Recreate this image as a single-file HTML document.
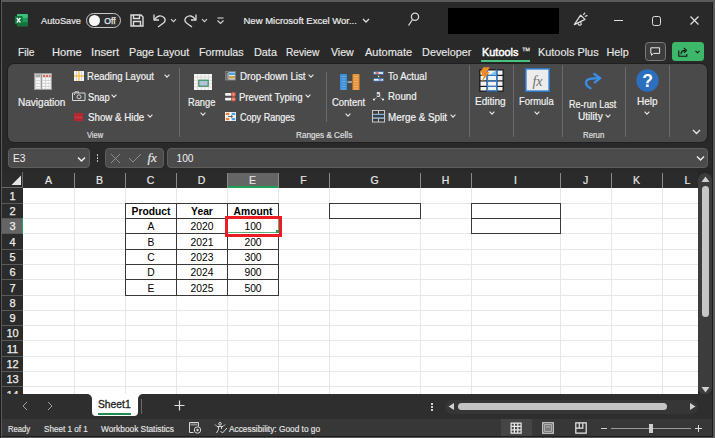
<!DOCTYPE html>
<html><head><meta charset="utf-8">
<style>
*{margin:0;padding:0;box-sizing:border-box}
html,body{width:715px;height:438px;overflow:hidden;background:#5a5a5a}
body{position:relative;font-family:"Liberation Sans",sans-serif;color:#fff}
.a{position:absolute}
.t{position:absolute;white-space:nowrap;line-height:12px}
#win{position:absolute;left:2px;top:2px;width:710px;height:434px;background:#292929;overflow:hidden}
.tab{font-size:10.8px;color:#e8e8e8;top:46px;-webkit-text-stroke:0.15px #e8e8e8}
.rb{font-size:10.8px;color:#f2f2f2;-webkit-text-stroke:0.2px #f2f2f2;transform:scaleX(0.885);transform-origin:0 0;margin-top:0.6px}
.gl{font-size:8.6px;color:#e0e0e0;-webkit-text-stroke:0.15px #e0e0e0;transform:scaleX(0.95);transform-origin:0 0;margin-top:0.3px}
.sep{position:absolute;width:1px;background:#6a6a6a}
.chev{position:absolute}
.col{position:absolute;top:173px;height:15px;line-height:15px;text-align:center;font-size:10.5px;color:#e6e6e6;-webkit-text-stroke:0.2px #e6e6e6}
.rh{position:absolute;left:2px;width:21px;text-align:center;font-size:11px;color:#eee;line-height:15px;-webkit-text-stroke:0.25px #eee;margin-top:-0.3px}
.cell{position:absolute;text-align:center;font-size:10.3px;color:#000;line-height:15px}
.sb{font-size:8.5px;color:#e6e6e6;top:422.8px;-webkit-text-stroke:0.15px #e6e6e6}
</style></head>
<body>
<div id="win"></div>
<!-- left dark column edge -->
<div class="a" style="left:0;top:0;width:1px;height:438px;background:#1a1a1a"></div>
<div class="a" style="left:712px;top:2px;width:1px;height:435px;background:#1c1c1c"></div>
<div class="a" style="left:2px;top:436px;width:711px;height:1px;background:#1c1c1c"></div>

<!-- ===== TITLE BAR ===== -->
<svg class="a" style="left:14px;top:13px" width="14" height="14" viewBox="0 0 14 14">
  <rect x="3" y="1" width="10.8" height="12.2" rx="1" fill="#1f9d55"/>
  <rect x="3" y="1" width="10.8" height="4" rx="1" fill="#3ac27c"/>
  <rect x="3" y="9.2" width="10.8" height="4" rx="1" fill="#14713d"/>
  <rect x="0.8" y="3" width="7.8" height="8.2" rx="0.8" fill="#10783f"/>
  <path d="M2.8 4.9l3.6 4.6M6.4 4.9l-3.6 4.6" stroke="#fff" stroke-width="1.3"/>
</svg>
<div class="t" style="left:41px;top:15.2px;font-size:9.2px;color:#e6e6e6;-webkit-text-stroke:0.2px #e6e6e6">AutoSave</div>
<div class="a" style="left:86px;top:12.5px;width:35px;height:15.7px;border:1.5px solid #c9c9c9;border-radius:8px;background:#2e2e2e"></div>
<div class="a" style="left:89px;top:14.8px;width:11px;height:11px;border-radius:50%;background:#f6f6f6"></div>
<div class="t" style="left:104.3px;top:14.9px;font-size:8.6px;color:#eaeaea;-webkit-text-stroke:0.25px #eaeaea">Off</div>
<!-- save icon -->
<svg class="a" style="left:130px;top:14px" width="14" height="13" viewBox="0 0 14 13" fill="none" stroke="#dcdcdc" stroke-width="1.4">
  <path d="M1 1h10l2 2v9H1z"/><path d="M3.5 1v3.5h6V1"/><path d="M3.5 12V7.5h7V12"/>
</svg>
<!-- undo -->
<svg class="a" style="left:152px;top:13px" width="15" height="15" viewBox="0 0 15 15" fill="none" stroke="#dcdcdc" stroke-width="1.3" stroke-linejoin="round">
  <path d="M2 1.5V7h5"/><path d="M2.5 6.5Q7 0.5 12 4.5Q14.5 7.5 11.5 10L6 14"/>
</svg>
<svg class="a" style="left:170px;top:18px" width="7" height="5" viewBox="0 0 7 5" fill="none" stroke="#d6d6d6" stroke-width="1.1"><path d="M1 1.2l2.5 2.5 2.5-2.5"/></svg>
<!-- redo -->
<svg class="a" style="left:183px;top:13px" width="15" height="15" viewBox="0 0 15 15" fill="none" stroke="#dcdcdc" stroke-width="1.3" stroke-linejoin="round">
  <path d="M13 1.5V7H8"/><path d="M12.5 6.5Q8 0.5 3 4.5Q0.5 7.5 3.5 10L9 14"/>
</svg>
<svg class="a" style="left:200.5px;top:18px" width="7" height="5" viewBox="0 0 7 5" fill="none" stroke="#d6d6d6" stroke-width="1.1"><path d="M1 1.2l2.5 2.5 2.5-2.5"/></svg>
<!-- customize -->
<svg class="a" style="left:216px;top:17px" width="9" height="8" viewBox="0 0 9 8" fill="none" stroke="#d6d6d6" stroke-width="1.1"><path d="M1.5 1h6"/><path d="M1.5 3.5l3 3 3-3"/></svg>
<div class="t" style="left:243.5px;top:15.3px;font-size:9.5px;color:#ececec;-webkit-text-stroke:0.2px #ececec">New Microsoft Excel Wor...</div>
<svg class="a" style="left:362px;top:18px" width="8" height="6" viewBox="0 0 8 6" fill="none" stroke="#ddd" stroke-width="1.3"><path d="M1 1l3 3 3-3"/></svg>
<!-- search -->
<svg class="a" style="left:407px;top:11px" width="13" height="16" viewBox="0 0 13 16" fill="none" stroke="#d8d8d8" stroke-width="1.3">
  <circle cx="8" cy="5.8" r="3.6"/><path d="M5.5 8.5L1.5 14.5"/>
</svg>
<div class="a" style="left:448px;top:8px;width:111px;height:25.5px;background:#000"></div>
<!-- coauthor icon -->
<svg class="a" style="left:570px;top:10px" width="20" height="20" viewBox="0 0 20 20" fill="none" stroke="#e0e0e0" stroke-width="1.2" stroke-linejoin="round" stroke-linecap="round">
  <path d="M4.3 14.6L10.6 5.2l4.4 4.2z"/><path d="M8 13.6q0.8 2.4 3.2 1.2l-0.3-2.3"/><path d="M13.6 4.6l1.1-1.5M15.3 6.3l1.7-0.7"/>
</svg>
<div class="a" style="left:614px;top:19.5px;width:8.5px;height:1.5px;background:#e0e0e0"></div>
<div class="a" style="left:651.5px;top:16px;width:9.5px;height:9.5px;border:1.3px solid #e0e0e0;border-radius:2.5px"></div>
<svg class="a" style="left:690px;top:16px" width="9" height="9" viewBox="0 0 9 9" stroke="#e0e0e0" stroke-width="1.2"><path d="M0.5 0.5l8 8M8.5 0.5l-8 8"/></svg>

<!-- ===== MENU TABS ===== -->
<div class="t tab" style="left:18.0px;transform:scaleX(0.947);transform-origin:0 0">File</div>
<div class="t tab" style="left:52.0px;transform:scaleX(1.032);transform-origin:0 0">Home</div>
<div class="t tab" style="left:91.3px;transform:scaleX(1.046);transform-origin:0 0">Insert</div>
<div class="t tab" style="left:129.2px;transform:scaleX(0.992);transform-origin:0 0">Page Layout</div>
<div class="t tab" style="left:199.0px;transform:scaleX(0.993);transform-origin:0 0">Formulas</div>
<div class="t tab" style="left:253.5px;transform:scaleX(1.005);transform-origin:0 0">Data</div>
<div class="t tab" style="left:286.3px;transform:scaleX(0.940);transform-origin:0 0">Review</div>
<div class="t tab" style="left:331.0px;transform:scaleX(0.979);transform-origin:0 0">View</div>
<div class="t tab" style="left:365.1px;transform:scaleX(1.021);transform-origin:0 0">Automate</div>
<div class="t tab" style="left:422.1px;transform:scaleX(1.000);transform-origin:0 0">Developer</div>
<div class="t tab" style="left:481.6px;color:#fff;-webkit-text-stroke:0.45px #fff;transform:scaleX(1.011);transform-origin:0 0">Kutools</div>
<div class="t tab" style="left:521.5px;color:#fff;font-size:9px;top:45px">™</div>
<div class="a" style="left:481px;top:60px;width:49px;height:2px;background:#47c27a"></div>
<div class="t tab" style="left:538.3px;transform:scaleX(1.010);transform-origin:0 0">Kutools Plus</div>
<div class="t tab" style="left:606.5px;transform:scaleX(1.000);transform-origin:0 0">Help</div>
<div class="a" style="left:645px;top:42px;width:20.5px;height:19px;border:1.2px solid #7a7a7a;border-radius:3.5px;background:#3c3c3c"></div>
<svg class="a" style="left:649.5px;top:46.5px" width="11" height="9" viewBox="0 0 11 9" fill="none" stroke="#eaeaea" stroke-width="1"><path d="M0.8 0.8h8.8v5.6H3.5L1.5 8.3V6.4H0.8z"/></svg>
<div class="a" style="left:672px;top:42px;width:32px;height:19px;border-radius:3.5px;background:#3db76a"></div>
<svg class="a" style="left:677.5px;top:46.5px" width="10" height="10" viewBox="0 0 10 10" fill="none" stroke="#141414" stroke-width="1.1" stroke-linejoin="round"><path d="M0.8 3.5v5.7h8V7"/><path d="M3 7.2c0-2.6 1.6-3.8 4.2-3.8M5.8 1l2.8 2.4-2.8 2.4"/></svg>
<svg class="a" style="left:695px;top:50px" width="5" height="4" viewBox="0 0 5 4" fill="none" stroke="#141414" stroke-width="1.1"><path d="M0.5 0.8l2 2 2-2"/></svg>

<!-- ===== RIBBON ===== -->
<div class="a" style="left:8px;top:64px;width:699px;height:78px;background:#4a4a4a;border-radius:6px;box-shadow:0 0 0 1px #202020"></div>

<!-- View group -->
<svg class="a" style="left:34px;top:73px" width="18" height="17" viewBox="0 0 18 17">
  <rect x="0" y="0" width="18" height="17" fill="#9c9c9c"/>
  <rect x="1" y="1" width="16" height="15" fill="#d6d6d6"/>
  <rect x="1.5" y="1.5" width="5" height="2.5" fill="#a8a8a8"/>
  <g fill="#f4f4f4"><rect x="2" y="5" width="4" height="2"/><rect x="2" y="8" width="4" height="2"/><rect x="2" y="11" width="4" height="2"/><rect x="2" y="14" width="4" height="1.5"/></g>
  <rect x="7" y="1" width="1" height="15" fill="#9a9a9a"/>
  <g fill="#e2604a"><rect x="9" y="2" width="2" height="2"/><rect x="12" y="2" width="2" height="2"/><rect x="15" y="2" width="1.5" height="2"/></g>
  <g fill="#fafafa"><rect x="8.5" y="5" width="2.5" height="1.8"/><rect x="12" y="5" width="2.5" height="1.8"/><rect x="15" y="5" width="1.5" height="1.8"/><rect x="8.5" y="8" width="2.5" height="1.8"/><rect x="12" y="8" width="2.5" height="1.8"/><rect x="15" y="8" width="1.5" height="1.8"/><rect x="8.5" y="11" width="2.5" height="1.8"/><rect x="12" y="11" width="2.5" height="1.8"/><rect x="15" y="11" width="1.5" height="1.8"/><rect x="8.5" y="14" width="2.5" height="1.5"/><rect x="12" y="14" width="2.5" height="1.5"/><rect x="15" y="14" width="1.5" height="1.5"/></g>
</svg>
<div class="t rb" style="left:18.1px;top:95.3px;transform:scaleX(0.929)">Navigation</div>

<svg class="a" style="left:73.5px;top:71px" width="10" height="10" viewBox="0 0 10 10">
  <rect x="0" y="0" width="10" height="10" fill="#f4f4f4"/>
  <g fill="#c9c6dc"><rect x="2" y="0" width="0.8" height="10"/><rect x="7.2" y="0" width="0.8" height="10"/></g>
  <rect x="4.3" y="0" width="1.4" height="10" fill="#f3c44f"/><rect x="0" y="4.1" width="10" height="1.6" fill="#f3c44f"/>
</svg>
<div class="t rb" style="left:87.0px;top:69.6px;transform:scaleX(0.885)">Reading Layout</div>
<svg class="chev" style="left:163.5px;top:74.1px" width="6" height="4" viewBox="0 0 6 4" fill="none" stroke="#e8e8e8" stroke-width="1.1"><path d="M0.6 0.7L3 3.1 5.4 0.7"/></svg>

<svg class="a" style="left:72px;top:90.5px" width="13.5" height="10" viewBox="0 0 13.5 10" fill="none" stroke="#d6d6d6" stroke-width="1">
  <path d="M0.5 2h12.5v7.5H0.5z"/><path d="M3 2V0.8h3.5V2"/><circle cx="7" cy="5.8" r="2"/><path d="M2 3.5h1"/>
</svg>
<div class="t rb" style="left:88.0px;top:90.8px;transform:scaleX(0.857)">Snap</div>
<svg class="chev" style="left:111.4px;top:93.8px" width="6" height="4" viewBox="0 0 6 4" fill="none" stroke="#e8e8e8" stroke-width="1.1"><path d="M0.6 0.7L3 3.1 5.4 0.7"/></svg>

<svg class="a" style="left:74px;top:112.5px" width="9" height="8.5" viewBox="0 0 9 8.5">
  <rect width="9" height="8.5" fill="#b8262f"/><g fill="#d8707a"><rect x="1.5" y="3.8" width="1" height="1"/><rect x="4" y="3.8" width="1" height="1"/><rect x="6.5" y="3.8" width="1" height="1"/></g>
</svg>
<div class="t rb" style="left:88.0px;top:110.5px;transform:scaleX(0.901)">Show &amp; Hide</div>
<svg class="chev" style="left:146.6px;top:114.0px" width="6" height="4" viewBox="0 0 6 4" fill="none" stroke="#e8e8e8" stroke-width="1.1"><path d="M0.6 0.7L3 3.1 5.4 0.7"/></svg>
<div class="t gl" style="left:87px;top:129.2px;transform:scaleX(0.873)">View</div>
<div class="sep" style="left:179px;top:68px;height:69px"></div>

<!-- Ranges & Cells group -->
<svg class="a" style="left:193.5px;top:73.5px" width="18" height="16" viewBox="0 0 18 16">
  <rect width="18" height="16" fill="#f6f6f6"/>
  <g stroke="#d2d2d2" stroke-width="0.7"><path d="M0 3.2h18M0 6.4h18M0 9.6h18M0 12.8h18M3.6 0v16M7.2 0v16M10.8 0v16M14.4 0v16"/></g>
  <rect x="4.8" y="6.2" width="9.4" height="6" fill="#b3c3d8" stroke="#2e8b57" stroke-width="1.1"/>
</svg>
<div class="t rb" style="left:188.4px;top:95.3px;transform:scaleX(0.859)">Range</div>
<svg class="chev" style="left:199.8px;top:112.1px" width="6" height="4" viewBox="0 0 6 4" fill="none" stroke="#e8e8e8" stroke-width="1.1"><path d="M0.6 0.7L3 3.1 5.4 0.7"/></svg>

<svg class="a" style="left:225px;top:71px" width="11" height="9.5" viewBox="0 0 11 9.5">
  <rect x="0.5" y="0.5" width="10" height="8.5" fill="#e8e8e8" stroke="#7a7a7a" stroke-width="1"/>
  <rect x="1" y="1" width="2.5" height="7.5" fill="#5a5a5a"/>
  <g fill="#eee"><rect x="1.6" y="2.5" width="1.3" height="0.8"/><rect x="1.6" y="4.5" width="1.3" height="0.8"/><rect x="1.6" y="6.5" width="1.3" height="0.8"/></g>
  <rect x="4" y="1.5" width="6" height="2.5" fill="#4aa3e0"/><rect x="4" y="5" width="6" height="2.5" fill="#c9a050"/>
</svg>
<div class="t rb" style="left:239.5px;top:69.6px;transform:scaleX(0.903)">Drop-down List</div>
<svg class="chev" style="left:308.2px;top:73.8px" width="6" height="4" viewBox="0 0 6 4" fill="none" stroke="#e8e8e8" stroke-width="1.1"><path d="M0.6 0.7L3 3.1 5.4 0.7"/></svg>

<svg class="a" style="left:225px;top:92px" width="11" height="9.5" viewBox="0 0 11 9.5">
  <rect x="0" y="1" width="6.5" height="2.8" rx="1" fill="#f0f0f0"/><rect x="0" y="5.8" width="6.5" height="2.8" rx="1" fill="#f0f0f0"/>
  <circle cx="8.5" cy="2.4" r="2.3" fill="#e0604a"/><circle cx="8.5" cy="7.2" r="2.3" fill="#e0604a"/>
  <path d="M7.7 1.6l1.6 1.6M9.3 1.6l-1.6 1.6M7.7 6.4l1.6 1.6M9.3 6.4l-1.6 1.6" stroke="#fbe0da" stroke-width="0.6"/>
</svg>
<div class="t rb" style="left:239.0px;top:90px;transform:scaleX(0.885)">Prevent Typing</div>
<svg class="chev" style="left:304.6px;top:94.2px" width="6" height="4" viewBox="0 0 6 4" fill="none" stroke="#e8e8e8" stroke-width="1.1"><path d="M0.6 0.7L3 3.1 5.4 0.7"/></svg>

<svg class="a" style="left:225px;top:112px" width="11" height="9" viewBox="0 0 11 9">
  <rect width="11" height="9" fill="#f4f4f4"/>
  <rect x="0.8" y="0.8" width="3.5" height="2.3" fill="#e8843a"/><rect x="0.8" y="5.9" width="3.5" height="2.3" fill="#e8843a"/>
  <rect x="6.7" y="0.8" width="3.5" height="2.3" fill="#4aa3e0"/><rect x="6.7" y="5.9" width="3.5" height="2.3" fill="#4aa3e0"/>
  <path d="M3 4.5h4.5M6 3.3l1.5 1.2L6 5.7" stroke="#444" stroke-width="0.8" fill="none"/>
</svg>
<div class="t rb" style="left:240.0px;top:110.5px;transform:scaleX(0.839)">Copy Ranges</div>
<div class="sep" style="left:326px;top:72px;height:50px"></div>

<svg class="a" style="left:339.5px;top:73.5px" width="20" height="16.5" viewBox="0 0 20 16.5">
  <rect x="0" y="0" width="7" height="16.5" rx="0.8" fill="#3d8fd8"/><rect x="12.5" y="0" width="7" height="16.5" rx="0.8" fill="#e8943a"/>
  <path d="M7.5 8h4.5" stroke="#d8d8d8" stroke-width="1.2"/>
  <g stroke="#8cc0ee" stroke-width="0.6"><path d="M1.5 2.5h4M1.5 5h4M1.5 7.5h4M1.5 10h4M1.5 12.5h4M1.5 15h4"/></g>
  <g stroke="#f5c48e" stroke-width="0.6"><path d="M14 2.5h4M14 5h4M14 7.5h4M14 10h4M14 12.5h4M14 15h4"/></g>
</svg>
<div class="t rb" style="left:332.3px;top:95.3px;transform:scaleX(0.877)">Content</div>
<svg class="chev" style="left:345.4px;top:112.8px" width="6" height="4" viewBox="0 0 6 4" fill="none" stroke="#e8e8e8" stroke-width="1.1"><path d="M0.6 0.7L3 3.1 5.4 0.7"/></svg>

<svg class="a" style="left:372.5px;top:70.5px" width="11" height="11" viewBox="0 0 11 11">
  <rect x="0.3" y="0.5" width="10.4" height="3" rx="0.5" fill="#3d8fd8"/><rect x="1" y="1.2" width="9" height="1.6" fill="#f4f4f4"/><rect x="2.5" y="1.2" width="3" height="1.6" fill="#d9534f"/>
  <rect x="0.3" y="7.3" width="10.4" height="3" rx="0.5" fill="#3d8fd8"/><rect x="1" y="8" width="9" height="1.6" fill="#f4f4f4"/><rect x="5.5" y="8" width="3" height="1.6" fill="#9b7fd0"/>
  <rect x="5" y="4.8" width="1.2" height="1.4" fill="#eee"/>
</svg>
<div class="t rb" style="left:388.0px;top:69.6px;transform:scaleX(0.885)">To Actual</div>

<svg class="a" style="left:372px;top:91px" width="13" height="10" viewBox="0 0 13 10" fill="none">
  <text x="4.6" y="6.2" font-size="6.8" font-family="Liberation Sans" font-weight="bold" fill="#f0f0f0">5</text>
  <circle cx="2" cy="8.5" r="1.1" fill="#f0f0f0"/><circle cx="11" cy="8.5" r="1.1" fill="#f0f0f0"/>
  <path d="M3.3 7.6l1.2-0.9M9.7 7.6l-1.2-0.9" stroke="#cfcfcf" stroke-width="0.8"/>
</svg>
<div class="t rb" style="left:388.2px;top:89.6px;transform:scaleX(0.898)">Round</div>

<svg class="a" style="left:371.5px;top:110px" width="13" height="12.5" viewBox="0 0 13 12.5">
  <rect x="0.5" y="0.5" width="12" height="11.5" fill="#3a3a3a" stroke="#c8c8c8" stroke-width="1"/>
  <path d="M0.5 4.3h12M0.5 8.2h12M6.5 0.5v3.8M6.5 8.2v3.8" stroke="#c8c8c8" stroke-width="1"/>
  <path d="M1 4.6h11M1 7.9h11" stroke="#6fb0e8" stroke-width="0.9"/>
</svg>
<div class="t rb" style="left:388.2px;top:110.5px;transform:scaleX(0.912)">Merge &amp; Split</div>
<svg class="chev" style="left:449.7px;top:114.3px" width="6" height="4" viewBox="0 0 6 4" fill="none" stroke="#e8e8e8" stroke-width="1.1"><path d="M0.6 0.7L3 3.1 5.4 0.7"/></svg>
<div class="t gl" style="left:296px;top:129px">Ranges &amp; Cells</div>
<div class="sep" style="left:469px;top:65px;height:72px"></div>

<!-- Editing -->
<svg class="a" style="left:478px;top:67px" width="26" height="25" viewBox="0 0 26 25">
  <rect x="1.2" y="2.2" width="24.5" height="22.5" fill="#1c1c1c"/>
  <g fill="#f2f2f2">
    <rect x="2.5" y="3.5" width="6" height="4.3"/><rect x="10" y="3.5" width="8" height="4.3"/><rect x="19.5" y="3.5" width="5" height="4.3"/>
    <rect x="2.5" y="9" width="6" height="4.3"/><rect x="10" y="9" width="8" height="4.3"/><rect x="19.5" y="9" width="5" height="4.3"/>
    <rect x="2.5" y="14.5" width="6" height="4.3"/><rect x="10" y="14.5" width="8" height="4.3"/><rect x="19.5" y="14.5" width="5" height="4.3"/>
    <rect x="2.5" y="20" width="6" height="3.5"/><rect x="10" y="20" width="8" height="3.5"/><rect x="19.5" y="20" width="5" height="3.5"/>
  </g>
  <path d="M18 3.5v4.3h-6z" fill="#7cc0f0"/>
  <g fill="#2f7fd0"><rect x="8.8" y="2.5" width="1.3" height="22"/><rect x="18" y="2.5" width="1.3" height="22"/><rect x="8.8" y="7.9" width="10.5" height="1.1"/><rect x="8.8" y="13.4" width="10.5" height="1.1"/><rect x="8.8" y="18.9" width="10.5" height="1.1"/><rect x="8.8" y="23.4" width="10.5" height="1.2"/></g>
  <path d="M5.5 0.3h6.3l-3 4.6h2.7L3.5 15.3l2.6-6.4H3.2l1-3.2H1.8z" fill="#f08a24"/>
</svg>
<div class="t rb" style="left:475.1px;top:94px;transform:scaleX(0.929)">Editing</div>
<svg class="chev" style="left:488.5px;top:111.1px" width="6" height="4" viewBox="0 0 6 4" fill="none" stroke="#e8e8e8" stroke-width="1.1"><path d="M0.6 0.7L3 3.1 5.4 0.7"/></svg>
<div class="sep" style="left:513px;top:65px;height:72px"></div>

<!-- Formula -->
<svg class="a" style="left:525px;top:68px" width="25" height="24" viewBox="0 0 25 24">
  <rect x="0.8" y="0.8" width="23.4" height="22.4" fill="#ececec" stroke="#2b78c8" stroke-width="1.6"/>
  <text x="12.5" y="17.5" font-size="14" font-family="Liberation Serif" font-style="italic" fill="#6e6e6e" text-anchor="middle">fx</text>
</svg>
<div class="t rb" style="left:519.1px;top:94px;transform:scaleX(0.875)">Formula</div>
<svg class="chev" style="left:534.3px;top:111.1px" width="6" height="4" viewBox="0 0 6 4" fill="none" stroke="#e8e8e8" stroke-width="1.1"><path d="M0.6 0.7L3 3.1 5.4 0.7"/></svg>
<div class="sep" style="left:562px;top:65px;height:72px"></div>

<!-- Rerun -->
<svg class="a" style="left:583px;top:72px" width="20" height="19" viewBox="0 0 20 19" fill="none">
  <path d="M7.5 16.3C3 14.5 1.8 10.5 4.2 8.2C6 6.5 9 6.2 16.5 6.2" stroke="#3a8ee6" stroke-width="2.3" stroke-linecap="round"/>
  <path d="M11.3 2l6 4.2-5.6 4.2" stroke="#3a8ee6" stroke-width="2.3" stroke-linecap="round" stroke-linejoin="round"/>
</svg>
<div class="t rb" style="left:569.0px;top:97.1px;transform:scaleX(0.840)">Re-run Last</div>
<div class="t rb" style="left:577.6px;top:109.5px;transform:scaleX(0.935)">Utility</div>
<svg class="chev" style="left:604.6px;top:114.0px" width="6" height="4" viewBox="0 0 6 4" fill="none" stroke="#e8e8e8" stroke-width="1.1"><path d="M0.6 0.7L3 3.1 5.4 0.7"/></svg>
<div class="t gl" style="left:582.5px;top:129px;transform:scaleX(0.91)">Rerun</div>
<div class="sep" style="left:625px;top:67px;height:70px"></div>

<!-- Help -->
<svg class="a" style="left:636px;top:69px" width="23" height="23" viewBox="0 0 23 23">
  <circle cx="11.5" cy="11.5" r="11.2" fill="#2c6fbe"/>
  <text x="11.5" y="18.3" font-size="17.5" font-family="Liberation Sans" font-weight="bold" fill="#fff" text-anchor="middle">?</text>
</svg>
<div class="t rb" style="left:636.6px;top:94px;transform:scaleX(0.927)">Help</div>
<svg class="chev" style="left:643.8px;top:111.1px" width="6" height="4" viewBox="0 0 6 4" fill="none" stroke="#e8e8e8" stroke-width="1.1"><path d="M0.6 0.7L3 3.1 5.4 0.7"/></svg>
<div class="sep" style="left:669px;top:65px;height:72px"></div>
<svg class="chev" style="left:692px;top:128.8px" width="9" height="6" viewBox="0 0 9 6" fill="none" stroke="#e6e6e6" stroke-width="1.3"><path d="M1 1l3.5 3.5L8 1"/></svg>

<!-- ===== FORMULA BAR ===== -->
<div class="a" style="left:8px;top:148px;width:82px;height:20px;background:#4b4b4b;border:1px solid #5e5e5e;border-radius:4px"></div>
<div class="t" style="left:13px;top:153.3px;font-size:10.2px;color:#eee">E3</div>
<svg class="chev" style="left:77px;top:156px" width="9" height="7" viewBox="0 0 9 7" fill="none" stroke="#f0f0f0" stroke-width="1.5"><path d="M1 1.5l3.5 3.5 3.5-3.5"/></svg>
<div class="a" style="left:96.5px;top:154px;width:1.6px;height:1.6px;background:#ddd;border-radius:1px"></div>
<div class="a" style="left:96.5px;top:157.2px;width:1.6px;height:1.6px;background:#ddd;border-radius:1px"></div>
<div class="a" style="left:96.5px;top:160.4px;width:1.6px;height:1.6px;background:#ddd;border-radius:1px"></div>
<div class="a" style="left:105px;top:148px;width:59px;height:20px;background:#4b4b4b;border:1px solid #5e5e5e;border-radius:4px"></div>
<svg class="a" style="left:110px;top:153px" width="11" height="11" viewBox="0 0 11 11" stroke="#8e8e8e" stroke-width="1"><path d="M1 1l9 9M10 1L1 10"/></svg>
<svg class="a" style="left:127.5px;top:153px" width="14" height="10" viewBox="0 0 14 10" fill="none" stroke="#8e8e8e" stroke-width="1"><path d="M1 5l4 4 8-8"/></svg>
<div class="t" style="left:147.5px;top:151.5px;font-size:13px;font-family:'Liberation Serif',serif;font-style:italic;color:#e6e6e6;-webkit-text-stroke:0.2px #e6e6e6">fx</div>
<div class="a" style="left:167px;top:148px;width:541px;height:20px;background:#4b4b4b;border:1px solid #5e5e5e;border-radius:4px"></div>
<div class="t" style="left:176.5px;top:153.3px;font-size:10.2px;color:#f0f0f0">100</div>
<svg class="chev" style="left:696px;top:155px" width="9" height="7" viewBox="0 0 9 7" fill="none" stroke="#f0f0f0" stroke-width="1.4"><path d="M1 1.5l3.5 3.5 3.5-3.5"/></svg>

<!-- ===== GRID ===== -->
<div class="a" style="left:2px;top:172px;width:696px;height:16px;background:#2b2b2b"></div>
<!-- select-all triangle -->
<svg class="a" style="left:10.5px;top:175px" width="11" height="11" viewBox="0 0 11 11"><path d="M10 0.5V10H0.5z" fill="#e6e6e6"/></svg>
<div class="a" style="left:2px;top:187px;width:21px;height:1px;background:#6a6a6a"></div>
<div class="a" style="left:22px;top:172px;width:1px;height:16px;background:#6a6a6a"></div>
<!-- cells area -->
<div class="a" style="left:23px;top:188px;width:675px;height:206px;background:#fff"></div>
<div class="a" style="left:2px;top:188px;width:21px;height:205px;background:#2b2b2b"></div>
<div class="a" style="left:228px;top:173px;width:50px;height:14px;background:#656565"></div>
<div class="a" style="left:227px;top:186px;width:52px;height:2px;background:#21a05a"></div>
<div class="col" style="left:23px;width:51px">A</div>
<div class="col" style="left:74px;width:51px">B</div>
<div class="a" style="left:74px;top:173px;width:1px;height:15px;background:#8a8a8a"></div>
<div class="col" style="left:125px;width:51px">C</div>
<div class="a" style="left:125px;top:173px;width:1px;height:15px;background:#8a8a8a"></div>
<div class="col" style="left:176px;width:51px">D</div>
<div class="a" style="left:176px;top:173px;width:1px;height:15px;background:#8a8a8a"></div>
<div class="col" style="left:227px;width:51px">E</div>
<div class="a" style="left:227px;top:173px;width:1px;height:15px;background:#8a8a8a"></div>
<div class="col" style="left:278px;width:51px">F</div>
<div class="a" style="left:278px;top:173px;width:1px;height:15px;background:#8a8a8a"></div>
<div class="col" style="left:329px;width:91px">G</div>
<div class="a" style="left:329px;top:173px;width:1px;height:15px;background:#8a8a8a"></div>
<div class="col" style="left:420px;width:51px">H</div>
<div class="a" style="left:420px;top:173px;width:1px;height:15px;background:#8a8a8a"></div>
<div class="col" style="left:471px;width:89px">I</div>
<div class="a" style="left:471px;top:173px;width:1px;height:15px;background:#8a8a8a"></div>
<div class="col" style="left:560px;width:51px">J</div>
<div class="a" style="left:560px;top:173px;width:1px;height:15px;background:#8a8a8a"></div>
<div class="col" style="left:611px;width:51px">K</div>
<div class="a" style="left:611px;top:173px;width:1px;height:15px;background:#8a8a8a"></div>
<div class="col" style="left:662px;width:51px">L</div>
<div class="a" style="left:662px;top:173px;width:1px;height:15px;background:#8a8a8a"></div>
<div class="a" style="left:74px;top:188px;width:1px;height:206px;background:#e7e7e7"></div>
<div class="a" style="left:125px;top:188px;width:1px;height:206px;background:#e7e7e7"></div>
<div class="a" style="left:176px;top:188px;width:1px;height:206px;background:#e7e7e7"></div>
<div class="a" style="left:227px;top:188px;width:1px;height:206px;background:#e7e7e7"></div>
<div class="a" style="left:278px;top:188px;width:1px;height:206px;background:#e7e7e7"></div>
<div class="a" style="left:329px;top:188px;width:1px;height:206px;background:#e7e7e7"></div>
<div class="a" style="left:420px;top:188px;width:1px;height:206px;background:#e7e7e7"></div>
<div class="a" style="left:471px;top:188px;width:1px;height:206px;background:#e7e7e7"></div>
<div class="a" style="left:560px;top:188px;width:1px;height:206px;background:#e7e7e7"></div>
<div class="a" style="left:611px;top:188px;width:1px;height:206px;background:#e7e7e7"></div>
<div class="a" style="left:662px;top:188px;width:1px;height:206px;background:#e7e7e7"></div>
<div class="a" style="left:23px;top:203px;width:675px;height:1px;background:#e7e7e7"></div>
<div class="a" style="left:2px;top:203px;width:21px;height:1px;background:#5a5a5a"></div>
<div class="a" style="left:23px;top:218px;width:675px;height:1px;background:#e7e7e7"></div>
<div class="a" style="left:2px;top:218px;width:21px;height:1px;background:#5a5a5a"></div>
<div class="a" style="left:23px;top:233px;width:675px;height:1px;background:#e7e7e7"></div>
<div class="a" style="left:2px;top:233px;width:21px;height:1px;background:#5a5a5a"></div>
<div class="a" style="left:23px;top:249px;width:675px;height:1px;background:#e7e7e7"></div>
<div class="a" style="left:2px;top:249px;width:21px;height:1px;background:#5a5a5a"></div>
<div class="a" style="left:23px;top:264px;width:675px;height:1px;background:#e7e7e7"></div>
<div class="a" style="left:2px;top:264px;width:21px;height:1px;background:#5a5a5a"></div>
<div class="a" style="left:23px;top:279px;width:675px;height:1px;background:#e7e7e7"></div>
<div class="a" style="left:2px;top:279px;width:21px;height:1px;background:#5a5a5a"></div>
<div class="a" style="left:23px;top:295px;width:675px;height:1px;background:#e7e7e7"></div>
<div class="a" style="left:2px;top:295px;width:21px;height:1px;background:#5a5a5a"></div>
<div class="a" style="left:23px;top:310px;width:675px;height:1px;background:#e7e7e7"></div>
<div class="a" style="left:2px;top:310px;width:21px;height:1px;background:#5a5a5a"></div>
<div class="a" style="left:23px;top:325px;width:675px;height:1px;background:#e7e7e7"></div>
<div class="a" style="left:2px;top:325px;width:21px;height:1px;background:#5a5a5a"></div>
<div class="a" style="left:23px;top:340px;width:675px;height:1px;background:#e7e7e7"></div>
<div class="a" style="left:2px;top:340px;width:21px;height:1px;background:#5a5a5a"></div>
<div class="a" style="left:23px;top:356px;width:675px;height:1px;background:#e7e7e7"></div>
<div class="a" style="left:2px;top:356px;width:21px;height:1px;background:#5a5a5a"></div>
<div class="a" style="left:23px;top:371px;width:675px;height:1px;background:#e7e7e7"></div>
<div class="a" style="left:2px;top:371px;width:21px;height:1px;background:#5a5a5a"></div>
<div class="a" style="left:23px;top:386px;width:675px;height:1px;background:#e7e7e7"></div>
<div class="a" style="left:2px;top:386px;width:21px;height:1px;background:#5a5a5a"></div>
<div class="a" style="left:2px;top:219px;width:20px;height:14px;background:#656565"></div>
<div class="a" style="left:22px;top:218px;width:1px;height:16px;background:#21a05a"></div>
<div class="rh" style="top:189px">1</div>
<div class="rh" style="top:204px">2</div>
<div class="rh" style="top:219px">3</div>
<div class="rh" style="top:235px">4</div>
<div class="rh" style="top:250px">5</div>
<div class="rh" style="top:265px">6</div>
<div class="rh" style="top:281px">7</div>
<div class="rh" style="top:296px">8</div>
<div class="rh" style="top:311px">9</div>
<div class="rh" style="top:326px">10</div>
<div class="rh" style="top:342px">11</div>
<div class="rh" style="top:357px">12</div>
<div class="rh" style="top:372px">13</div>
<div class="rh" style="top:388px">14</div>
<div class="cell" style="left:125px;top:204px;width:52px;font-weight:bold;">Product</div>
<div class="cell" style="left:176px;top:204px;width:52px;font-weight:bold;">Year</div>
<div class="cell" style="left:227px;top:204px;width:52px;font-weight:bold;">Amount</div>
<div class="cell" style="left:125px;top:219px;width:52px;">A</div>
<div class="cell" style="left:176px;top:219px;width:52px;">2020</div>
<div class="cell" style="left:227px;top:219px;width:52px;">100</div>
<div class="cell" style="left:125px;top:235px;width:52px;">B</div>
<div class="cell" style="left:176px;top:235px;width:52px;">2021</div>
<div class="cell" style="left:227px;top:235px;width:52px;">200</div>
<div class="cell" style="left:125px;top:250px;width:52px;">C</div>
<div class="cell" style="left:176px;top:250px;width:52px;">2023</div>
<div class="cell" style="left:227px;top:250px;width:52px;">300</div>
<div class="cell" style="left:125px;top:265px;width:52px;">D</div>
<div class="cell" style="left:176px;top:265px;width:52px;">2024</div>
<div class="cell" style="left:227px;top:265px;width:52px;">900</div>
<div class="cell" style="left:125px;top:281px;width:52px;">E</div>
<div class="cell" style="left:176px;top:281px;width:52px;">2025</div>
<div class="cell" style="left:227px;top:281px;width:52px;">500</div>
<div class="a" style="left:125px;top:203px;width:1px;height:93px;background:#383838"></div>
<div class="a" style="left:176px;top:203px;width:1px;height:93px;background:#383838"></div>
<div class="a" style="left:227px;top:203px;width:1px;height:93px;background:#383838"></div>
<div class="a" style="left:278px;top:203px;width:1px;height:93px;background:#383838"></div>
<div class="a" style="left:125px;top:203px;width:154px;height:1px;background:#383838"></div>
<div class="a" style="left:125px;top:218px;width:154px;height:1px;background:#383838"></div>
<div class="a" style="left:125px;top:233px;width:154px;height:1px;background:#383838"></div>
<div class="a" style="left:125px;top:249px;width:154px;height:1px;background:#383838"></div>
<div class="a" style="left:125px;top:264px;width:154px;height:1px;background:#383838"></div>
<div class="a" style="left:125px;top:279px;width:154px;height:1px;background:#383838"></div>
<div class="a" style="left:125px;top:295px;width:154px;height:1px;background:#383838"></div>
<div class="a" style="left:329px;top:203px;width:92px;height:16px;border:1px solid #383838"></div>
<div class="a" style="left:471px;top:203px;width:90px;height:31px;border:1px solid #383838"></div>
<div class="a" style="left:471px;top:218px;width:90px;height:1px;background:#383838"></div>
<div class="a" style="left:228px;top:218px;width:51px;height:16px;background:#fff"></div>
<div class="cell" style="left:227px;top:219px;width:52px">100</div>
<div class="a" style="left:228px;top:232px;width:51px;height:1px;background:#5fae7f"></div>
<div class="a" style="left:278px;top:218px;width:1px;height:15px;background:#5fae7f"></div>
<div class="a" style="left:276px;top:230px;width:3px;height:3px;background:#21a05a"></div>
<div class="a" style="left:225px;top:215.5px;width:57px;height:21.5px;border:3px solid #ec1c24"></div>

<!-- vertical scrollbar -->
<div class="a" style="left:698px;top:168px;width:14px;height:226px;background:#262626"></div>
<div class="a" style="left:698px;top:173px;width:13.5px;height:222px;background:#3c3c3c;border-radius:7px"></div>
<svg class="a" style="left:701px;top:176px" width="9" height="7" viewBox="0 0 9 7"><path d="M4.5 0.5L8.5 6H0.5z" fill="#d0d0d0"/></svg>
<div class="a" style="left:702px;top:186px;width:7px;height:131px;background:#c6c6c6;border-radius:3.5px"></div>
<svg class="a" style="left:701px;top:386px" width="9" height="7" viewBox="0 0 9 7"><path d="M4.5 6.5L8.5 1H0.5z" fill="#d0d0d0"/></svg>
<!-- ===== SHEET TABS ===== -->
<div class="a" style="left:2px;top:394px;width:710px;height:25px;background:#2e2e2e"></div>
<div class="a" style="left:86px;top:394px;width:58px;height:6px;background:#fff"></div>
<div class="a" style="left:2px;top:394px;width:90px;height:25px;background:#2e2e2e;border-top-right-radius:5px"></div>
<div class="a" style="left:138px;top:394px;width:560px;height:25px;background:#2e2e2e;border-top-left-radius:5px"></div>
<div class="a" style="left:92px;top:394px;width:46px;height:22px;background:#fff;border-radius:0 0 4px 4px"></div>
<svg class="chev" style="left:21px;top:401px" width="7" height="10" viewBox="0 0 7 10" fill="none" stroke="#a0a0a0" stroke-width="1"><path d="M6 1L2 5l4 4"/></svg>
<svg class="chev" style="left:47px;top:401px" width="7" height="10" viewBox="0 0 7 10" fill="none" stroke="#a0a0a0" stroke-width="1"><path d="M1 1l4 4-4 4"/></svg>
<div class="t" style="left:98px;top:399.1px;font-size:10.3px;color:#1c1c1c;-webkit-text-stroke:0.3px #1c1c1c">Sheet1</div>
<div class="a" style="left:98px;top:412.5px;width:33px;height:2px;background:#1e8c4e"></div>
<div class="a" style="left:141px;top:399px;width:1px;height:15px;background:#6a6a6a"></div>
<svg class="a" style="left:174px;top:400px" width="11" height="11" viewBox="0 0 11 11" stroke="#e0e0e0" stroke-width="1.2"><path d="M5.5 0.5v10M0.5 5.5h10"/></svg>
<div class="a" style="left:430.5px;top:403px;width:2px;height:2px;background:#d0d0d0"></div>
<div class="a" style="left:430.5px;top:406px;width:2px;height:2px;background:#d0d0d0"></div>
<div class="a" style="left:430.5px;top:409px;width:2px;height:2px;background:#d0d0d0"></div>
<div class="a" style="left:445px;top:400px;width:253px;height:14px;background:#363636;border-radius:7px"></div>
<svg class="a" style="left:447px;top:402px" width="8" height="9" viewBox="0 0 8 9"><path d="M1.5 4.5L7 1v7z" fill="#d0d0d0"/></svg>
<div class="a" style="left:458px;top:403px;width:209px;height:7px;background:#c4c4c4;border-radius:3.5px"></div>
<svg class="a" style="left:689px;top:402px" width="8" height="9" viewBox="0 0 8 9"><path d="M6.5 4.5L1 1v7z" fill="#d0d0d0"/></svg>

<!-- ===== STATUS BAR ===== -->
<div class="a" style="left:2px;top:419px;width:710px;height:17px;background:#373737"></div>
<div class="t sb" style="left:8.4px;transform:scaleX(0.904);transform-origin:0 0">Ready</div>
<div class="t sb" style="left:44.0px;transform:scaleX(0.957);transform-origin:0 0">Sheet 1 of 1</div>
<div class="t sb" style="left:101.0px;transform:scaleX(0.979);transform-origin:0 0">Workbook Statistics</div>
<svg class="a" style="left:189px;top:422px" width="13" height="12" viewBox="0 0 13 12" fill="none" stroke="#d8d8d8" stroke-width="1"><path d="M9.5 4.5V0.5h-9v10h4"/><rect x="1.5" y="1.5" width="7" height="2" fill="#8a8a8a" stroke="none"/><circle cx="8.5" cy="8" r="3.2" fill="#353535"/><circle cx="8.5" cy="8" r="1.2" fill="#d8d8d8" stroke="none"/></svg>
<svg class="a" style="left:214px;top:422px" width="14" height="12" viewBox="0 0 14 12" fill="none" stroke="#d8d8d8" stroke-width="1"><circle cx="6" cy="1.8" r="1.3"/><path d="M1 2.5l2 2h6l2-2M4.5 4.5v3l-2 3.5M7.5 4.5v2.5"/><path d="M6.5 9l2 2 4.5-5"/></svg>
<div class="t sb" style="left:229.3px;transform:scaleX(0.979);transform-origin:0 0">Accessibility: Good to go</div>
<div class="a" style="left:501px;top:419px;width:31px;height:17px;background:#454545"></div>
<svg class="a" style="left:510px;top:422px" width="12" height="12" viewBox="0 0 12 12" fill="none" stroke="#eaeaea" stroke-width="1.2"><path d="M1.1 1.1h10v10h-10zM1.1 4.4h10M1.1 7.8h10M4.4 1.1v10M7.8 1.1v10"/></svg>
<svg class="a" style="left:542px;top:422px" width="12" height="12" viewBox="0 0 12 12" fill="none"><rect x="0.8" y="0.8" width="10.4" height="10.4" stroke="#e0e0e0" stroke-width="1.2"/><rect x="2.6" y="2.6" width="6.8" height="6.8" fill="#7a7a7a" stroke="#bdbdbd" stroke-width="0.9"/><rect x="4.2" y="4" width="3.6" height="2" fill="#9a9a9a"/></svg>
<svg class="a" style="left:574.5px;top:422px" width="12" height="12" viewBox="0 0 12 12" fill="none" stroke="#eaeaea" stroke-width="1.2"><path d="M0.8 0.8h10.4v10.4H0.8zM0.8 6.2h7V0.8M4.3 0.8v5.4"/></svg>
<div class="a" style="left:601px;top:427.5px;width:6px;height:1.2px;background:#d0d0d0"></div>
<div class="a" style="left:611px;top:428px;width:80px;height:1px;background:#9a9a9a"></div>
<div class="a" style="left:649px;top:424px;width:4px;height:9px;background:#cfcfcf"></div>
<div class="a" style="left:694.5px;top:427.5px;width:7px;height:1.2px;background:#d8d8d8"></div>
<div class="a" style="left:697.5px;top:424.5px;width:1.2px;height:7px;background:#d8d8d8"></div>
</body></html>
